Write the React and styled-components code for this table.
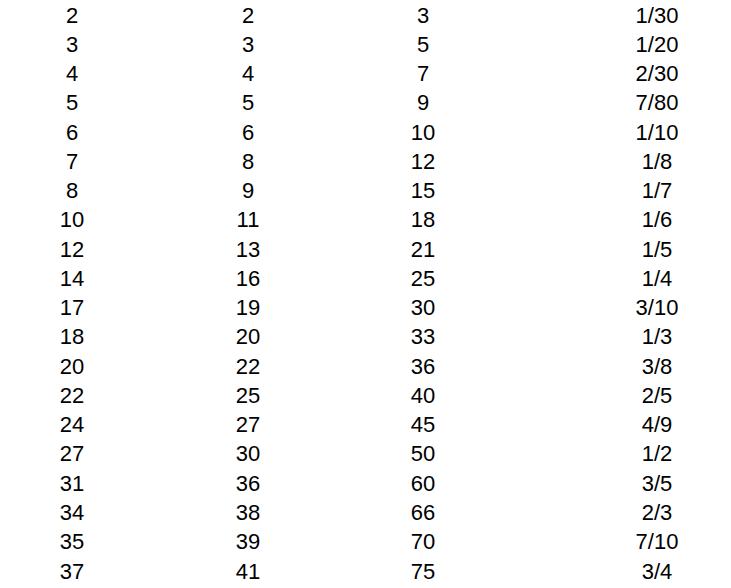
import React from "react";
import styled, { createGlobalStyle } from "styled-components";

const rows = [
  ["2", "2", "3", "1/30"],
  ["3", "3", "5", "1/20"],
  ["4", "4", "7", "2/30"],
  ["5", "5", "9", "7/80"],
  ["6", "6", "10", "1/10"],
  ["7", "8", "12", "1/8"],
  ["8", "9", "15", "1/7"],
  ["10", "11", "18", "1/6"],
  ["12", "13", "21", "1/5"],
  ["14", "16", "25", "1/4"],
  ["17", "19", "30", "3/10"],
  ["18", "20", "33", "1/3"],
  ["20", "22", "36", "3/8"],
  ["22", "25", "40", "2/5"],
  ["24", "27", "45", "4/9"],
  ["27", "30", "50", "1/2"],
  ["31", "36", "60", "3/5"],
  ["34", "38", "66", "2/3"],
  ["35", "39", "70", "7/10"],
  ["37", "41", "75", "3/4"],
];

const GlobalStyle = createGlobalStyle`
  html, body {
    margin: 0;
    padding: 0;
    background: #ffffff;
    overflow: hidden;
  }
`;

const Table = styled.div`
  display: grid;
  width: 731px;
  grid-template-columns: 144px 208px 142px 1fr;
  grid-auto-rows: 29.28px;
  padding-top: 0.5px;
  font-family: "Liberation Sans", Arial, sans-serif;
  font-size: 22px;
  color: #000000;
`;

const Cell = styled.div`
  text-align: center;
  line-height: 29px;
  white-space: nowrap;
  padding-left: ${(p) => (p.$last ? "89px" : "0")};
`;

export default function App() {
  return (
    <>
      <GlobalStyle />
      <Table>
        {rows.map((row, i) =>
          row.map((value, j) => (
            <Cell key={`${i}-${j}`} $last={j === 3}>
              {value}
            </Cell>
          ))
        )}
      </Table>
    </>
  );
}
